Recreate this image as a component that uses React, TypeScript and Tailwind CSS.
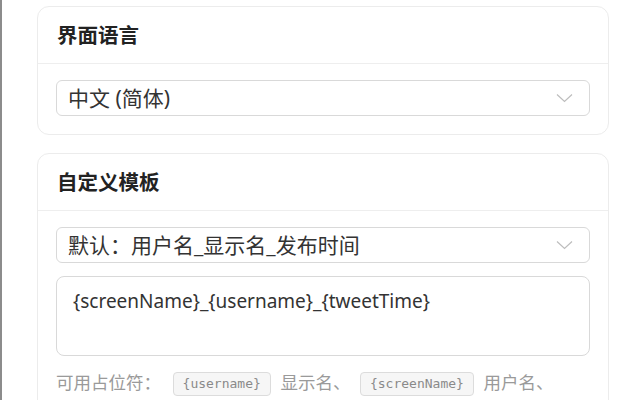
import React from "react";

const cjk = "font-['Noto_Sans','Noto_Sans_CJK_SC',sans-serif]";

function Chevron() {
    return (
        <svg width="17" height="10" viewBox="0 0 17 10" fill="none" className="shrink-0">
            <polyline points="1,1.5 8.5,8.5 16,1.5" stroke="#bdbdbd" strokeWidth="1.2" />
        </svg>
    );
}

function Select({value}: {value: string}) {
    return (
        <div className="flex items-center justify-between h-9 pl-[11px] pr-4 rounded-md border border-[#d9d9d9] bg-white">
            <span className="text-[21px] text-[#333] leading-none">{value}</span>
            <Chevron />
        </div>
    );
}

function Card({title, children}: {title: string, children: React.ReactNode}) {
    return (
        <div className="rounded-xl border border-[#ececec] bg-white">
            <div className="h-[57px] flex items-center px-[19px] border-b border-[#eeeeee]">
                <h2 className="text-[20.5px] font-bold text-[#222]">{title}</h2>
            </div>
            <div className="px-[18px] pt-4 pb-[18px]">{children}</div>
        </div>
    );
}

function Chip({text}: {text: string}) {
    return (
        <code className="inline-block mx-[5px] px-[9px] h-6 leading-[22px] align-middle rounded border border-[#dcdcdc] bg-[#f6f6f6] text-[13px] text-[#8a8a8a] font-['DejaVu_Sans_Mono',monospace]">
            {text}
        </code>
    );
}

export default function App(): JSX.Element {
    return (
        <div className={"w-[640px] h-[400px] overflow-hidden bg-white border-l-2 border-[#8c8c8c] " + cjk}>
            <div className="flex flex-col gap-[18px] pt-[6px] pl-[35px] w-[607px]">
                {/* Language */}
                <Card title="界面语言">
                    <Select value="中文 (简体)" />
                </Card>

                {/* Template */}
                <Card title="自定义模板">
                    <Select value="默认：用户名_显示名_发布时间" />
                    <div className="mt-[13px] h-20 rounded-lg border border-[#d9d9d9] px-4 py-3 text-[19px] leading-6 text-[#333]">
                        {"{screenName}_{username}_{tweetTime}"}
                    </div>
                    <p className="mt-[13px] text-[17.5px] leading-[27px] text-[#9a9a9a]">
                        <span className="mr-[2px]">可用占位符：</span>{" "}
                        <Chip text="{username}" /> 显示名、{" "}
                        <Chip text="{screenName}" /> 用户名、{" "}
                        <Chip text="{userId}" /> 用户的数字 ID（不会随用户改名变化）、{" "}
                        <Chip text="{tweetId}" /> 推文 ID
                    </p>
                </Card>
            </div>
        </div>
    );
}
